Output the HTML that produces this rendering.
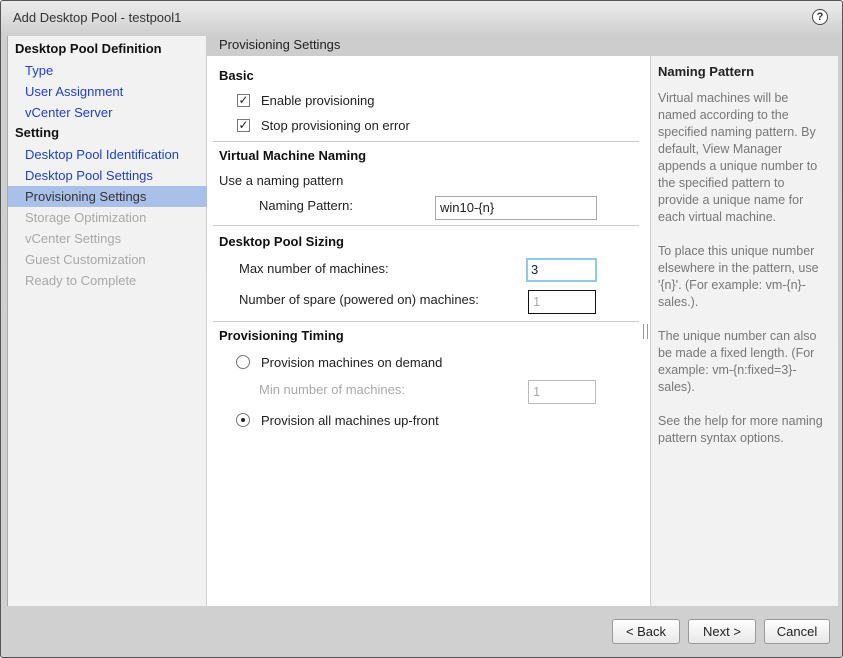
<!DOCTYPE html>
<html><head><style>
*{margin:0;padding:0;box-sizing:border-box}
body{width:843px;height:658px;background:#fff;font-family:"Liberation Sans",sans-serif;font-size:13px;color:#222;position:relative;overflow:hidden}
.win{position:absolute;left:0;top:0;width:843px;height:658px;border:1px solid #555;border-radius:3px;background:linear-gradient(#ececec,#cfcfcf 34px,#d0d0d0)}
.title{position:absolute;left:13px;top:10px;font-size:13px;color:#333}
.help{position:absolute;left:812px;top:9px;width:16px;height:16px;border:1px solid #444;border-radius:50%;font-size:11px;text-align:center;line-height:14px;font-weight:bold;color:#333;background:#fff}
.nav{position:absolute;left:7px;top:36px;width:199px;height:570px;background:#f2f2f2;border-left:1px solid #aaa}
.nav div{position:absolute;left:17px;font-size:13px}
.nav .h{left:7px;font-weight:bold;color:#111}
.nav .l{color:#1f3fd0}
.nav .d{color:#a8a8a8}
.nav .sel{position:absolute;left:0;top:150px;width:199px;height:21px;background:#a9c1e8}
.main{position:absolute;left:207px;top:36px;width:443px;height:570px;background:#fff}
.mh{position:absolute;left:0;top:0;width:443px;height:20px;background:#cdcdcd;padding-left:12px;line-height:18px;color:#222}
.t{position:absolute;white-space:nowrap}
.b{font-weight:bold;color:#111}
.hr{position:absolute;left:6px;width:426px;height:1px;background:#ccc}
.cb{position:absolute;width:13px;height:13px;border:1px solid #777;background:#fff;font-size:12px;line-height:11px;text-align:center;color:#222}
.rd{position:absolute;width:14px;height:14px;border:1px solid #777;border-radius:50%;background:#fff}
.inp{position:absolute;border:1px solid #aaa;background:#fff;padding-left:4px;line-height:22px;height:24px}
.right{position:absolute;left:650px;top:56px;width:188px;height:550px;background:#f2f2f2;border-left:1px solid #ccc;color:#777;font-size:12.5px;line-height:17px}
.rtop{position:absolute;left:650px;top:36px;width:190px;height:20px;background:#cdcdcd}
.btn{position:absolute;top:619px;height:25px;border:1px solid #999;border-radius:3px;background:linear-gradient(#fff,#e8e8e8);text-align:center;line-height:23px;color:#222}
</style></head><body>
<div class="win"></div>
<div class="title">Add Desktop Pool - testpool1</div>
<div class="help">?</div>
<div class="nav">
<div class="sel"></div>
<div class="h" style="top:5px">Desktop Pool Definition</div>
<div class="l" style="top:27px">Type</div>
<div class="l" style="top:48px">User Assignment</div>
<div class="l" style="top:69px">vCenter Server</div>
<div class="h" style="top:89px">Setting</div>
<div class="l" style="top:111px">Desktop Pool Identification</div>
<div class="l" style="top:132px">Desktop Pool Settings</div>
<div style="top:153px;color:#333">Provisioning Settings</div>
<div class="d" style="top:174px">Storage Optimization</div>
<div class="d" style="top:195px">vCenter Settings</div>
<div class="d" style="top:216px">Guest Customization</div>
<div class="d" style="top:237px">Ready to Complete</div>
</div>
<div class="main">
<div class="mh">Provisioning Settings</div>
<div class="t b" style="left:12px;top:32px">Basic</div>
<div class="cb" style="left:30px;top:58px">✓</div>
<div class="t" style="left:54px;top:57px">Enable provisioning</div>
<div class="cb" style="left:30px;top:83px">✓</div>
<div class="t" style="left:54px;top:82px">Stop provisioning on error</div>
<div class="hr" style="top:105px"></div>
<div class="t b" style="left:12px;top:112px">Virtual Machine Naming</div>
<div class="t" style="left:12px;top:137px">Use a naming pattern</div>
<div class="t" style="left:52px;top:162px">Naming Pattern:</div>
<div class="inp" style="left:228px;top:160px;width:162px">win10-{n}</div>
<div class="hr" style="top:189px"></div>
<div class="t b" style="left:12px;top:198px">Desktop Pool Sizing</div>
<div class="t" style="left:32px;top:225px">Max number of machines:</div>
<div class="inp" style="left:319px;top:222px;width:71px;border:2px solid #8ecaf0;padding-left:3px;line-height:20px">3</div>
<div class="t" style="left:32px;top:256px">Number of spare (powered on) machines:</div>
<div class="inp" style="left:321px;top:254px;width:68px;border:1px solid #111;color:#aaa">1</div>
<div class="hr" style="top:285px"></div>
<div style="position:absolute;left:436px;top:288px;width:5px;height:15px;border-left:1px solid #999;border-right:1px solid #999"></div>
<div class="t b" style="left:12px;top:292px">Provisioning Timing</div>
<div class="rd" style="left:29px;top:319px"></div>
<div class="t" style="left:54px;top:319px">Provision machines on demand</div>
<div class="t" style="left:52px;top:346px;color:#aaa">Min number of machines:</div>
<div class="inp" style="left:321px;top:344px;width:68px;color:#aaa;border-color:#bbb">1</div>
<div class="rd" style="left:29px;top:377px"><div style="position:absolute;left:4px;top:4px;width:4px;height:4px;border-radius:50%;background:#222"></div></div>
<div class="t" style="left:54px;top:377px">Provision all machines up-front</div>
</div>
<div class="rtop"></div>
<div class="right">
<div style="position:absolute;left:7px;top:7px;font-weight:bold;color:#222;font-size:13px">Naming Pattern</div>
<div style="position:absolute;left:7px;top:34px;width:168px">Virtual machines will be named according to the specified naming pattern. By default, View Manager appends a unique number to the specified pattern to provide a unique name for each virtual machine.<br><br>To place this unique number elsewhere in the pattern, use '{n}'. (For example: vm-{n}-sales.).<br><br>The unique number can also be made a fixed length. (For example: vm-{n:fixed=3}-sales).<br><br>See the help for more naming pattern syntax options.</div>
</div>
<div class="btn" style="left:612px;width:68px">&lt; Back</div>
<div class="btn" style="left:688px;width:68px">Next &gt;</div>
<div class="btn" style="left:764px;width:66px">Cancel</div>
</body></html>
